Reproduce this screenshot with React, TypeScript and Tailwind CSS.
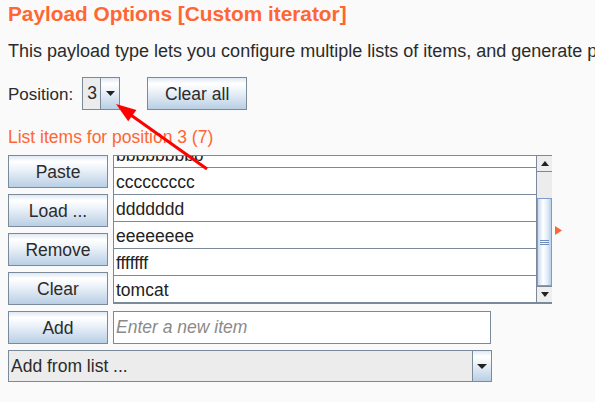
import React from "react";

const btnBg =
  "bg-[linear-gradient(to_bottom,#dfe9f4_0%,#ffffff_18%,#f3f7fb_35%,#b9cfe5_100%)]";

function Btn({ label, className = "" }: { label: string; className?: string }) {
  return (
    <div
      className={`flex items-center justify-center border border-[#7b8a9a] ${btnBg} text-[17.5px] leading-[20px] text-[#2b2b2b] ${className}`}
    >
      {label}
    </div>
  );
}

function DownTri({ w = 10, h = 5 }: { w?: number; h?: number }) {
  return (
    <svg width={w} height={h} viewBox={`0 0 ${w} ${h}`}>
      <polygon points={`0,0 ${w},0 ${w / 2},${h}`} fill="#222" />
    </svg>
  );
}

const rows = ["aaaaaaaaaa", "bbbbbbbbb", "ccccccccc", "ddddddd", "eeeeeeee", "fffffff", "tomcat"];

export default function App() {
  return (
    <div
      className="relative w-[595px] h-[402px] overflow-hidden bg-[#fafafa] text-[#2b2b2b] pl-[8px] pt-[2px]"
      style={{ fontFamily: '"Liberation Sans", Arial, sans-serif' }}
    >
      <div className="h-[24px] text-[20.8px] leading-[24px] font-bold text-[#ff6633] whitespace-nowrap">
        Payload Options [Custom iterator]
      </div>
      <div className="mt-[14px] h-[22px] text-[18px] leading-[22px] whitespace-nowrap">
        This payload type lets you configure multiple lists of items, and generate payloads using permutations of items in the lists.
      </div>

      <div className="mt-[15px] flex h-[33px] items-center">
        <span className="text-[17px] leading-[20px] pt-[2px]">Position:</span>
        <div className="ml-[9px] flex h-[33px] w-[38px] border border-[#7b8a9a]">
          <div className="flex w-[17px] items-center justify-center bg-[#ececec] text-[17.5px] pl-[1px]">
            3
          </div>
          <div className={`flex flex-1 items-center justify-center border-l border-[#7b8a9a] ${btnBg}`}>
            <DownTri w={9} h={5} />
          </div>
        </div>
        <Btn label="Clear all" className="ml-[27px] h-[33px] w-[100px]" />
      </div>

      <div className="mt-[17px] h-[20px] text-[17.5px] leading-[20px] text-[#ff6633] whitespace-nowrap">
        List items for position 3 (7)
      </div>

      <div className="mt-[8px] flex">
        <div className="flex w-[100px] flex-col gap-[6px]">
          <Btn label="Paste" className="h-[33px]" />
          <Btn label="Load ..." className="h-[33px]" />
          <Btn label="Remove" className="h-[33px]" />
          <Btn label="Clear" className="h-[33px]" />
        </div>
        <div className="ml-[5px] flex h-[149px] w-[439px] border-t border-l border-b-2 border-[#7b8a9a] bg-white">
          <div className="flex-1 overflow-hidden">
            <div className="-mt-[42px]">
              {rows.map((r) => (
                <div
                  key={r}
                  className="h-[27px] border-b border-[#7b8a9a] pl-[2px] pt-[4px] text-[17.5px] leading-[20px] text-[#222]"
                >
                  {r}
                </div>
              ))}
            </div>
          </div>
          <div className="flex w-[16px] flex-col border-l border-[#7b8a9a] bg-[#ececec]">
            <div className="flex h-[16px] items-center justify-center border-b border-[#7b8a9a] bg-[#eeeeee]">
              <svg width="8" height="5" viewBox="0 0 8 5">
                <polygon points="0,5 8,5 4,0" fill="#222" />
              </svg>
            </div>
            <div className="h-[26px] bg-[#ececec]" />
            <div className="relative flex flex-1 items-center justify-center border border-[#7c9bd0] bg-[linear-gradient(to_right,#c9daee_0%,#ffffff_40%,#e6eef8_70%,#b9cfe7_100%)]">
              <div className="flex flex-col gap-[1px]">
                <div className="h-[1px] w-[9px] bg-[#6f8cbf]" />
                <div className="h-[1px] w-[9px] bg-[#6f8cbf]" />
                <div className="h-[1px] w-[9px] bg-[#6f8cbf]" />
              </div>
            </div>
            <div className="flex h-[16px] items-center justify-center border-t border-[#7b8a9a] bg-[#eeeeee]">
              <DownTri w={8} h={5} />
            </div>
          </div>
        </div>
        <div className="ml-[3px] mt-[71px]">
          <svg width="7" height="9" viewBox="0 0 7 9">
            <polygon points="0,0 7,4.5 0,9" fill="#ff6633" />
          </svg>
        </div>
      </div>

      <div className="mt-[6px] flex h-[33px]">
        <Btn label="Add" className="w-[100px] h-[33px]" />
        <div className="ml-[5px] flex h-[33px] w-[378px] items-center border border-[#7b8a9a] bg-white pl-[2px] text-[17.5px] italic text-[#8a8a8a]">
          Enter a new item
        </div>
      </div>

      <div className="mt-[6px] flex h-[32px] w-[484px] border border-[#7b8a9a] bg-[#ececec]">
        <div className="flex flex-1 items-center pl-[2px] text-[17.5px] leading-[20px]">Add from list ...</div>
        <div className={`flex w-[19px] items-center justify-center border-l border-[#7b8a9a] ${btnBg}`}>
          <DownTri w={10} h={5} />
        </div>
      </div>

      <svg
        className="pointer-events-none absolute left-0 top-0"
        width="595"
        height="402"
        viewBox="0 0 595 402"
      >
        <line x1="207" y1="169" x2="128" y2="113" stroke="#ff0000" strokeWidth="3" />
        <polygon points="116,104 128.2,121.3 136.4,109.9" fill="#ff0000" />
      </svg>
    </div>
  );
}
